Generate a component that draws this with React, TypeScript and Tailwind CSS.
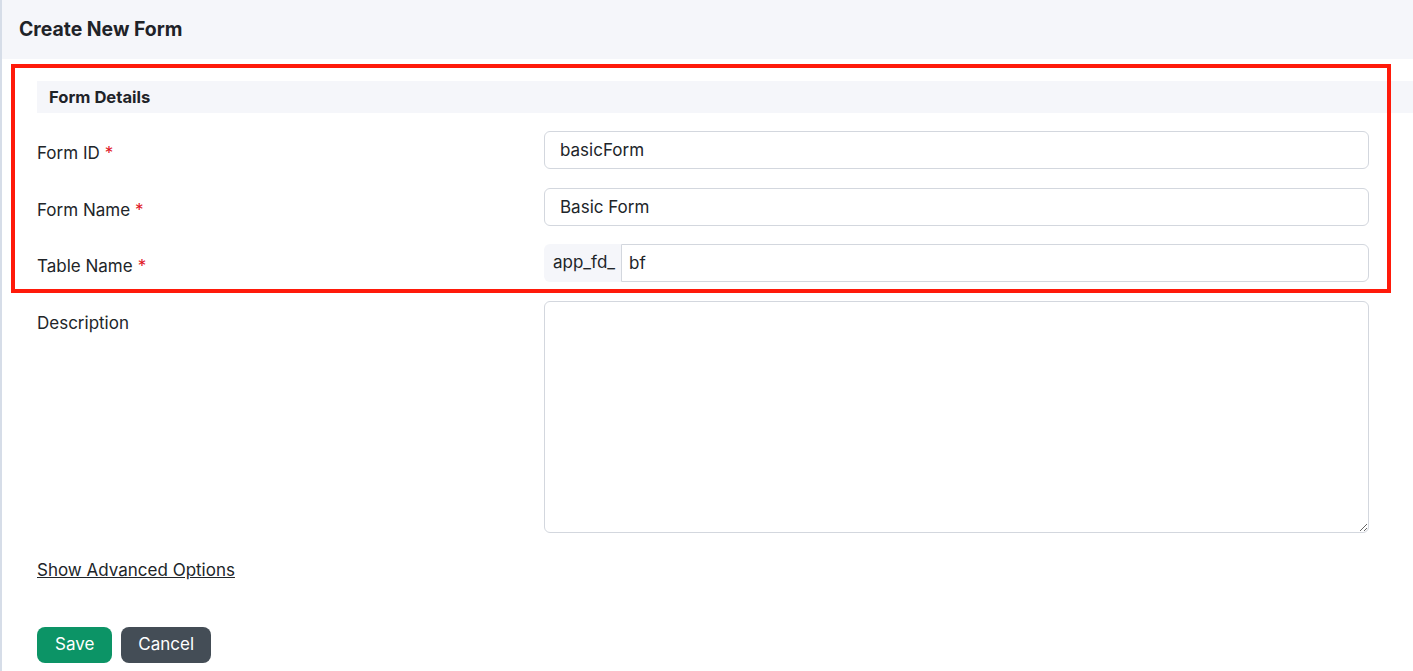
import React from "react";

function Field({ label, required, children }: { label: string; required?: boolean; children: React.ReactNode }) {
  return (
    <div className="flex items-start">
      <div className="w-[507px] shrink-0 pt-[10px] text-[17px] leading-[24px] text-[#212529]">
        {label}
        {required && <span className="ml-[5px] text-[#e0141e]">*</span>}
      </div>
      <div className="flex-1">{children}</div>
    </div>
  );
}

export default function App() {
  const inputCls =
    "w-full h-[38px] rounded-[6px] border border-[#d3d7de] bg-white px-[15px] text-[17px] text-[#212529] outline-none";

  return (
    <div
      className="relative min-h-[671px] w-full border-l-2 border-[#d6dde8] bg-white"
      style={{ fontFamily: "Inter, 'Noto Sans', 'Liberation Sans', sans-serif" }}
    >
      <div className="flex h-[59px] items-center bg-[#f5f6fa] px-[17px]">
        <h1 className="text-[19.4px] font-bold text-[#1f2328]">Create New Form</h1>
      </div>

      <div className="pl-[35px]">
        <div className="mt-[22px] flex h-[32px] items-center bg-[#f5f6fa] pl-[12px] text-[16.6px] font-bold text-[#1f2328]">
          Form Details
        </div>

        <div className="mt-[18px] flex flex-col gap-[18.5px] pr-[44px]">
          <Field label="Form ID" required>
            <input className={inputCls} defaultValue="basicForm" />
          </Field>
          <Field label="Form Name" required>
            <input className={inputCls} defaultValue="Basic Form" />
          </Field>
          <Field label="Table Name" required>
            <div className="flex h-[38px] w-full">
              <span className="flex items-center rounded-l-[6px] bg-[#f5f6fa] pl-[9px] pr-[6px] text-[17px] text-[#212529]">
                app_fd_
              </span>
              <input
                className="h-[38px] flex-1 rounded-r-[6px] border border-[#d3d7de] bg-white px-[7px] text-[17px] text-[#212529] outline-none"
                defaultValue="bf"
              />
            </div>
          </Field>
          <Field label="Description">
            <textarea className="block h-[232px] w-full rounded-[6px] border border-[#d3d7de] bg-white px-[15px] py-[6px] text-[17px] outline-none" />
          </Field>
        </div>

        <div className="mt-[25px]">
          <a href="#" className="text-[17px] leading-[24px] text-[#212529] underline">
            Show Advanced Options
          </a>
        </div>

        <div className="mt-[45px] flex gap-[9px]">
          <button className="h-[36px] rounded-[8px] bg-[#0c9466] px-[18px] text-[17px] text-white">Save</button>
          <button className="h-[36px] rounded-[8px] bg-[#444d56] px-[17px] text-[17px] text-white">Cancel</button>
        </div>
      </div>

      <div className="pointer-events-none absolute left-[9px] top-[64px] h-[229px] w-[1380px] border-4 border-[#ff1a0a]" />
    </div>
  );
}
